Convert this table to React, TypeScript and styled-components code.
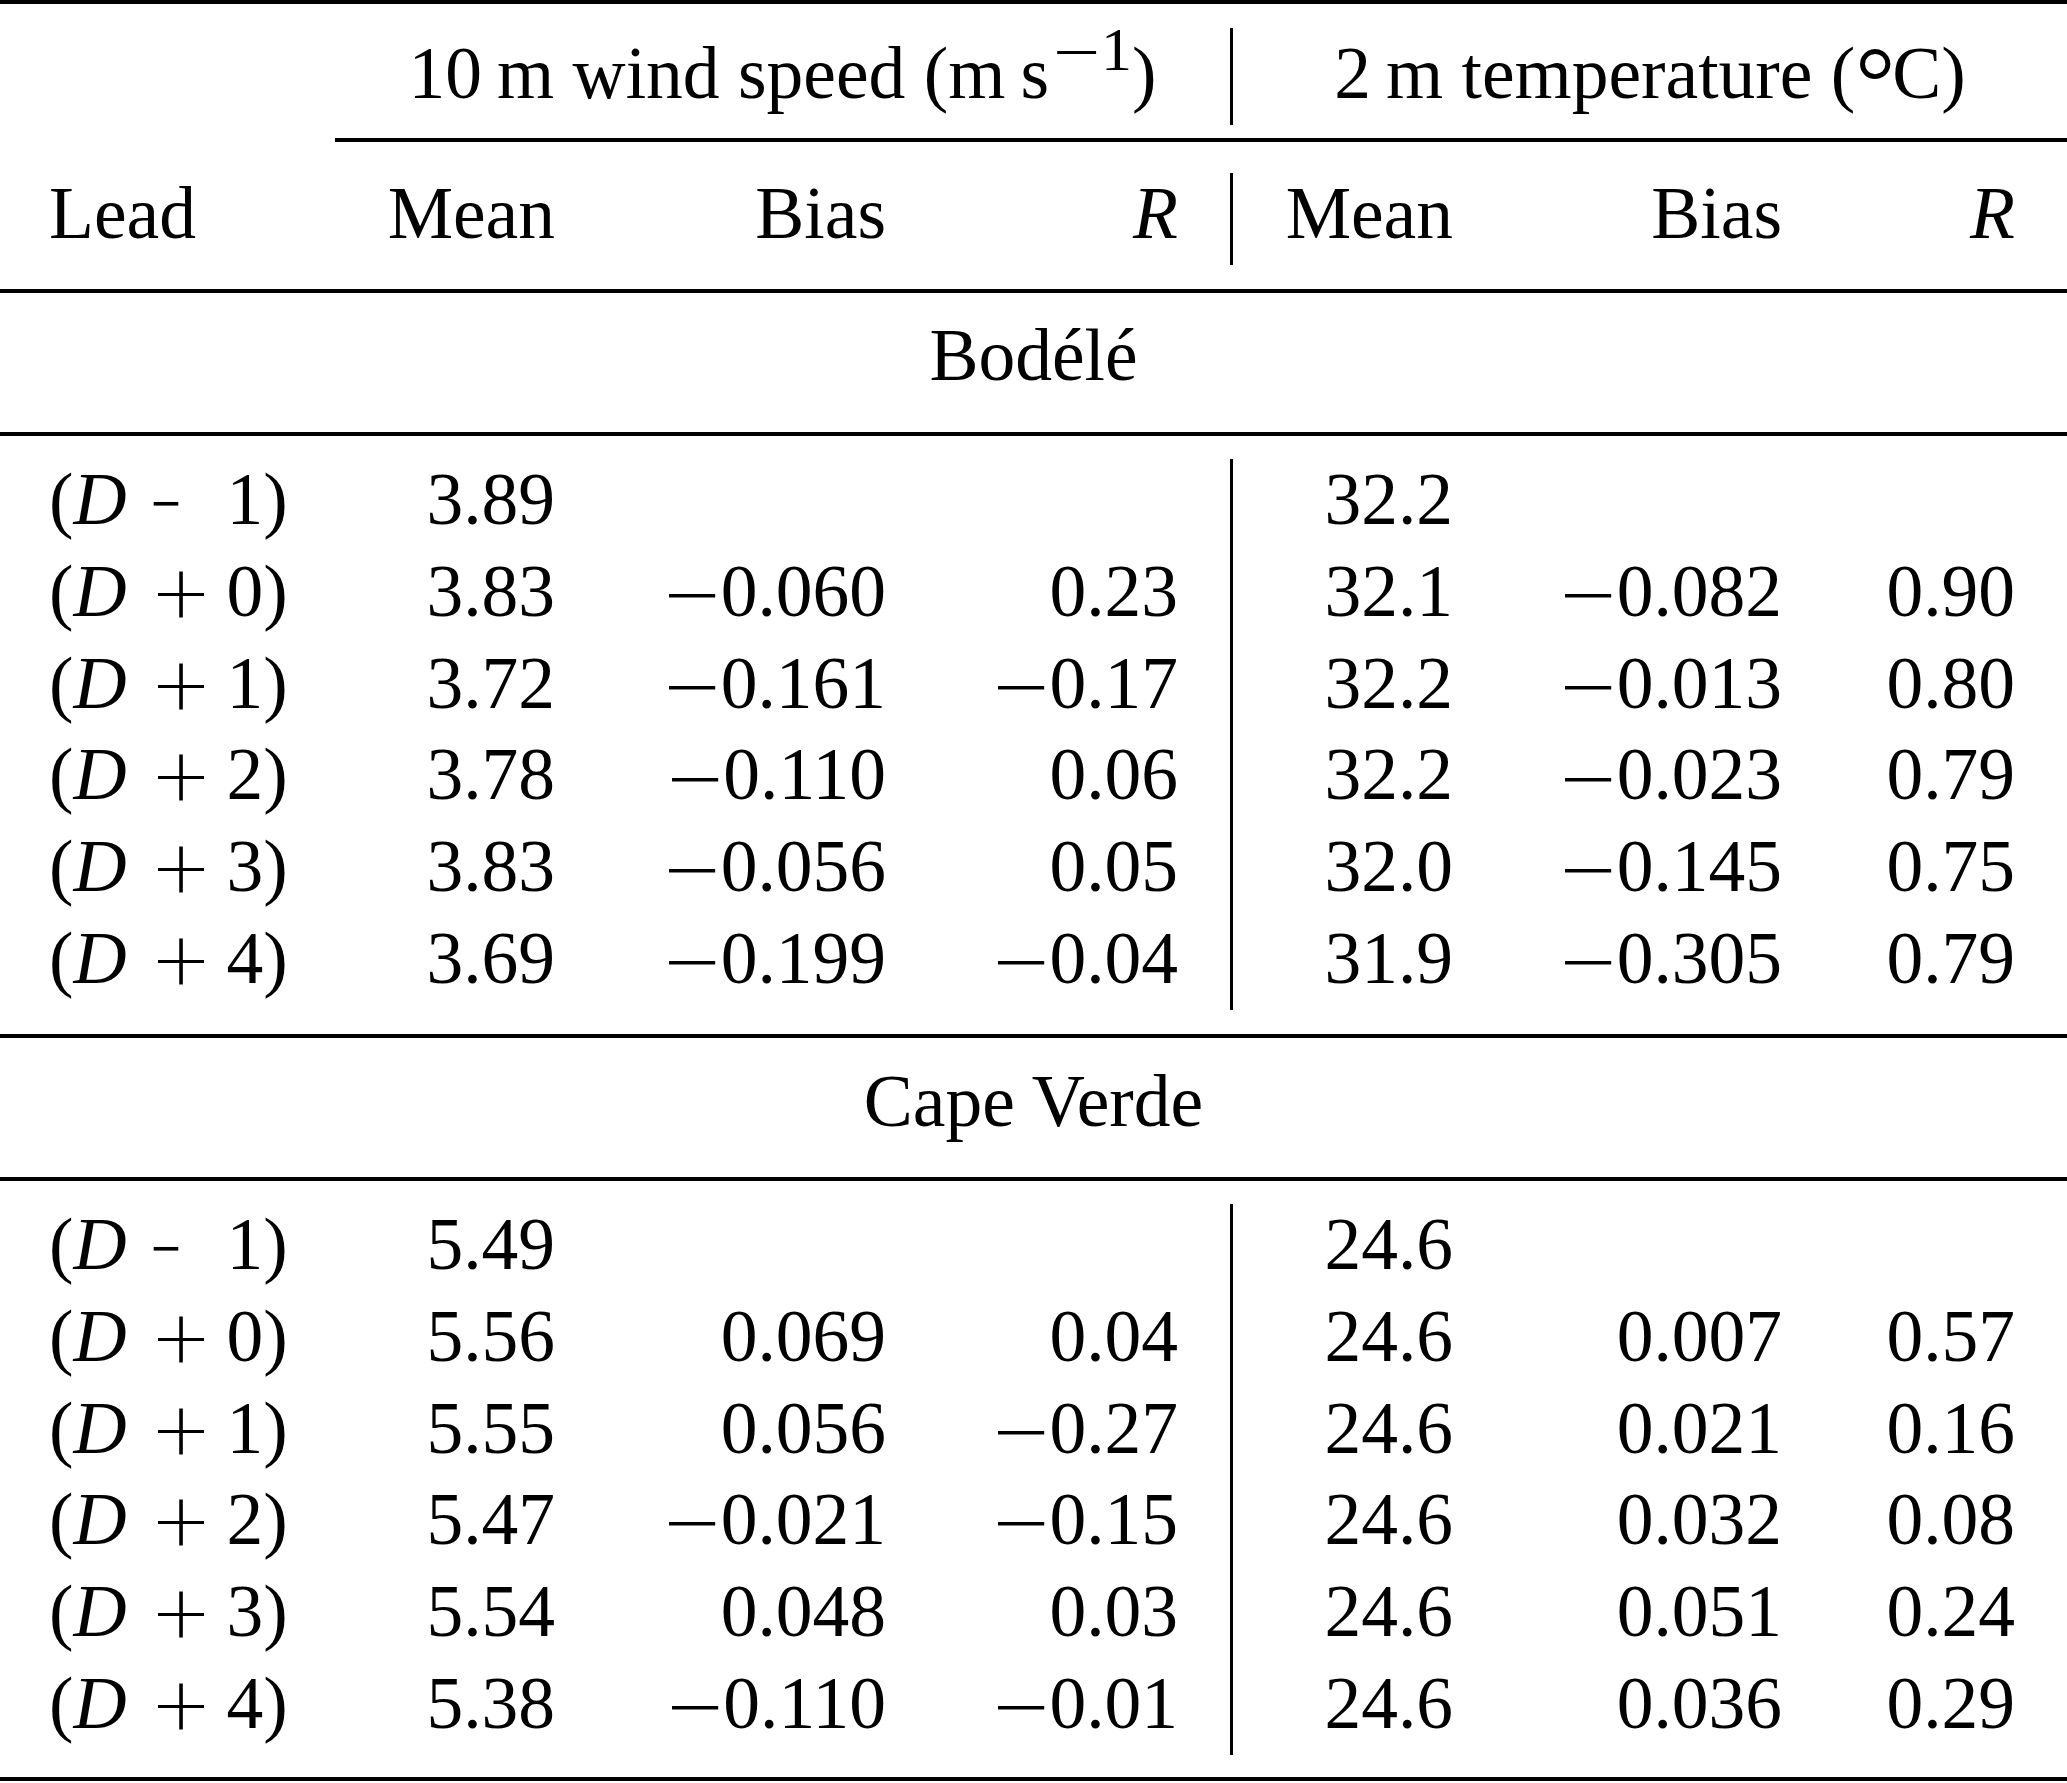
import React from "react";
import styled, { createGlobalStyle } from "styled-components";

const Global = createGlobalStyle`
  html, body { margin: 0; padding: 0; background: #ffffff; }
  body { font-family: "Liberation Serif", "Times New Roman", serif; color: #000; }
`;

const COLS = "335px 272px 331px 292px 275px 329px 233px";

const Table = styled.div`
  width: 2067px;
  display: flex;
  flex-direction: column;
  font-family: "Liberation Serif", "Times New Roman", serif;
  font-size: 73.5px;
  color: #000;
  background: #fff;
`;

const Rule = styled.div<{ $mt?: number; $ml?: number }>`
  height: 4px;
  background: #000;
  margin-top: ${(p) => p.$mt ?? 0}px;
  margin-left: ${(p) => p.$ml ?? 0}px;
`;

const Row = styled.div<{ $h: number; $mt?: number }>`
  display: grid;
  grid-template-columns: ${COLS};
  height: ${(p) => p.$h}px;
  margin-top: ${(p) => p.$mt ?? 0}px;
  line-height: 81px;
  white-space: nowrap;
`;

const Block = styled.div<{ $mt: number }>`
  display: flex;
  flex-direction: column;
  margin-top: ${(p) => p.$mt}px;
`;

type Align = "left" | "right" | "center";

const Cell = styled.div<{ $align?: Align; $span?: number; $divider?: boolean; $pt?: number }>`
  grid-column: span ${(p) => p.$span ?? 1};
  text-align: ${(p) => p.$align ?? "right"};
  padding-top: ${(p) => p.$pt ?? 0}px;
  padding-right: ${(p) => ((p.$align ?? "right") === "right" ? 52 : 0)}px;
  padding-left: ${(p) => (p.$align === "left" ? 49 : 0)}px;
  border-left: ${(p) => (p.$divider ? "3px solid #000" : "none")};
`;

/* wide math minus: Times minus stretched to the width of a TeX minus */
const Minus = styled.span`
  display: inline-block;
  width: 0.77em;
  margin-left: 0.068em;
  text-align: left;
  line-height: 0;
  vertical-align: -0.055em;
  transform: scaleX(1.35);
  transform-origin: 0 50%;
`;

/* short dash used in the (D − 1) lead label */
const ShortMinus = styled.span`
  display: inline-block;
  text-align: left;
  transform: scaleX(0.72);
  transform-origin: 0 50%;
  vertical-align: -4px;
  line-height: 0;
`;

const Plus = styled.span`
  font-family: "DejaVu Sans", "DejaVu Serif", sans-serif;
  font-weight: 200;
  line-height: 0;
  vertical-align: -2px;
`;

const Sup = styled.span`
  font-size: 62px;
  vertical-align: 28px;
  line-height: 0;
`;

const Degree = styled.span`
  font-size: 100px;
  line-height: 0;
  vertical-align: -17px;
  margin-right: -3px;
`;

const Thin = styled.span`
  display: inline-block;
  width: 15px;
`;

const Ital = styled.span`
  font-style: italic;
`;

const OpSlot = styled.span<{ $minus?: boolean }>`
  display: inline-block;
  width: 100px;
  box-sizing: border-box;
  padding-left: ${(p) => (p.$minus ? 24 : 9)}px;
  text-align: ${(p) => (p.$minus ? "left" : "center")};
`;

const Num: React.FC<{ v: string }> = ({ v }) =>
  v.startsWith("−") ? (
    <>
      <Minus>−</Minus>
      {v.slice(1)}
    </>
  ) : (
    <>{v}</>
  );

const Lead: React.FC<{ n: number }> = ({ n }) => (
  <>
    (<Ital>D</Ital>
    {n < 0 ? (
      <OpSlot $minus>
        <ShortMinus>−</ShortMinus>
      </OpSlot>
    ) : (
      <OpSlot>
        <Plus>+</Plus>
      </OpSlot>
    )}
    {Math.abs(n)})
  </>
);

type DataRow = { lead: number; v: string[] };

const bodele: DataRow[] = [
  { lead: -1, v: ["3.89", "", "", "32.2", "", ""] },
  { lead: 0, v: ["3.83", "−0.060", "0.23", "32.1", "−0.082", "0.90"] },
  { lead: 1, v: ["3.72", "−0.161", "−0.17", "32.2", "−0.013", "0.80"] },
  { lead: 2, v: ["3.78", "−0.110", "0.06", "32.2", "−0.023", "0.79"] },
  { lead: 3, v: ["3.83", "−0.056", "0.05", "32.0", "−0.145", "0.75"] },
  { lead: 4, v: ["3.69", "−0.199", "−0.04", "31.9", "−0.305", "0.79"] },
];

const capeVerde: DataRow[] = [
  { lead: -1, v: ["5.49", "", "", "24.6", "", ""] },
  { lead: 0, v: ["5.56", "0.069", "0.04", "24.6", "0.007", "0.57"] },
  { lead: 1, v: ["5.55", "0.056", "−0.27", "24.6", "0.021", "0.16"] },
  { lead: 2, v: ["5.47", "−0.021", "−0.15", "24.6", "0.032", "0.08"] },
  { lead: 3, v: ["5.54", "0.048", "0.03", "24.6", "0.051", "0.24"] },
  { lead: 4, v: ["5.38", "−0.110", "−0.01", "24.6", "0.036", "0.29"] },
];

const ROW_H = 551 / 6;

const DataRows: React.FC<{ rows: DataRow[]; mt: number }> = ({ rows, mt }) => (
  <Block $mt={mt}>
    {rows.map((r, i) => (
      <Row key={i} $h={ROW_H}>
        <Cell $align="left">
          <Lead n={r.lead} />
        </Cell>
        {r.v.map((val, j) => (
          <Cell key={j} $divider={j === 3}>
            <Num v={val} />
          </Cell>
        ))}
      </Row>
    ))}
  </Block>
);

const SectionTitle: React.FC<{ title: string; mt: number }> = ({ title, mt }) => (
  <Row $h={92} $mt={mt}>
    <Cell $align="center" $span={7}>
      {title}
    </Cell>
  </Row>
);

export default function App() {
  return (
    <>
      <Global />
      <Table>
        <Rule />
        <Row $h={97} $mt={24}>
          <Cell $align="left" />
          <Cell $align="center" $span={3} $pt={5}>
            10<Thin />m wind speed (m<Thin />s
            <Sup>
              <Minus>−</Minus>1
            </Sup>
            )
          </Cell>
          <Cell $align="center" $span={3} $pt={5} $divider>
            2<Thin />m temperature (<Degree>°</Degree>C)
          </Cell>
        </Row>
        <Rule $mt={13} $ml={335} />
        <Row $h={92} $mt={31}>
          <Cell $align="left">Lead</Cell>
          <Cell>Mean</Cell>
          <Cell>Bias</Cell>
          <Cell>
            <Ital>R</Ital>
          </Cell>
          <Cell $divider>Mean</Cell>
          <Cell>Bias</Cell>
          <Cell>
            <Ital>R</Ital>
          </Cell>
        </Row>
        <Rule $mt={24} />
        <SectionTitle title="Bodélé" mt={22} />
        <Rule $mt={25} />
        <DataRows rows={bodele} mt={23} />
        <Rule $mt={24} />
        <SectionTitle title="Cape Verde" mt={23} />
        <Rule $mt={24} />
        <DataRows rows={capeVerde} mt={23} />
        <Rule $mt={22} />
      </Table>
    </>
  );
}
